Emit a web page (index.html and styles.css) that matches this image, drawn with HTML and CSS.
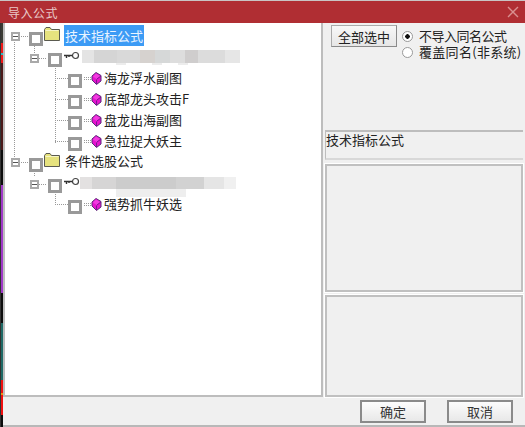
FILE: index.html
```html
<!DOCTYPE html>
<html lang="zh-CN">
<head>
<meta charset="utf-8">
<title>导入公式</title>
<link rel="stylesheet" href="styles.css">
</head>
<body>
<svg class="defs" width="0" height="0">
  <symbol id="folder" viewBox="0 0 16 14"><path d="M0.500 13.500V2.500L2 0.500H6L7.500 2.500H15.500V13.500Z" fill="#e6e27e" stroke="#5a5a50"/><path d="M1.500 3.500H14.500" stroke="#f6f4c4"/></symbol>
  <symbol id="key" viewBox="0 0 16 9"><path d="M0 4.500H8M2.500 4.500V7M5 4.500V6" stroke="#333" stroke-width="1.400" fill="none"/><circle cx="11.500" cy="4.500" r="3" fill="#fff" stroke="#444" stroke-width="1.200"/></symbol>
  <symbol id="gem" viewBox="0 0 11 13"><path d="M5 0.500L10 3.500V9L5.500 12.500L1 8V4Z" fill="#e612cf" stroke="#5b2a78"/><path d="M5 1.500L9 4L5.500 7L2 4.500Z" fill="#f23be0"/><path d="M5.500 7.500V12M6 7L10 4" stroke="#7a1a90" fill="none"/></symbol>
</svg>
<div class="window">
  <header class="titlebar">
    <span class="title">导入公式</span>
    <svg class="close" width="12" height="12" viewBox="0 0 12 12"><path d="M1 1L11 11M11 1L1 11" stroke="#d98f90" stroke-width="1.400" fill="none"/></svg>
  </header>
  <div class="content">
    <div class="edge"></div>
    <div class="main">
      <div class="upper">
        <div class="tree">
          <svg class="lines" width="120" height="200" viewBox="0 0 120 200">
            <path d="M9.500 17V135M29.500 21V30M50.500 43V120M29.500 146V154M50.500 169V183" stroke="#999" stroke-dasharray="1 1" fill="none"/>
          </svg>
          <div class="row r0"><span class="exp"></span><span class="dots"></span><span class="box"></span><svg class="folder" width="16" height="14"><use href="#folder"/></svg><span class="label selected">技术指标公式</span></div>
          <div class="row r1"><span class="exp"></span><span class="dots"></span><span class="box"></span><svg class="key" width="16" height="9"><use href="#key"/></svg><span class="blur b1"></span></div>
          <div class="row r2"><span class="dash"></span><span class="box"></span><span class="eq"></span><svg class="gem" width="11" height="13"><use href="#gem"/></svg><span class="label">海龙浮水副图</span></div>
          <div class="row r2"><span class="dash"></span><span class="box"></span><span class="eq"></span><svg class="gem" width="11" height="13"><use href="#gem"/></svg><span class="label">底部龙头攻击F</span></div>
          <div class="row r2"><span class="dash"></span><span class="box"></span><span class="eq"></span><svg class="gem" width="11" height="13"><use href="#gem"/></svg><span class="label">盘龙出海副图</span></div>
          <div class="row r2"><span class="dash"></span><span class="box"></span><span class="eq"></span><svg class="gem" width="11" height="13"><use href="#gem"/></svg><span class="label">急拉捉大妖主</span></div>
          <div class="row r0"><span class="exp"></span><span class="dots"></span><span class="box"></span><svg class="folder" width="16" height="14"><use href="#folder"/></svg><span class="label">条件选股公式</span></div>
          <div class="row r1"><span class="exp"></span><span class="dots"></span><span class="box"></span><svg class="key" width="16" height="9"><use href="#key"/></svg><span class="blur b2"></span></div>
          <div class="row r2"><span class="dash"></span><span class="box"></span><span class="eq"></span><svg class="gem" width="11" height="13"><use href="#gem"/></svg><span class="label">强势抓牛妖选</span></div>
        </div>
        <aside class="side">
          <div class="options">
            <button class="select-all">全部选中</button>
            <div class="radios">
              <label class="radio"><span class="dot on"></span><span class="rt tight">不导入同名公式</span></label>
              <label class="radio"><span class="dot"></span><span class="rt wide">覆盖同名(非系统)</span></label>
            </div>
          </div>
          <div class="panel info">技术指标公式</div>
          <div class="panel big"></div>
          <div class="panel big last"></div>
        </aside>
      </div>
      <footer class="actions">
        <button class="act">确定</button>
        <button class="act">取消</button>
      </footer>
    </div>
  </div>
</div>
</body>
</html>
```
FILE: styles.css
```css
* { box-sizing: border-box; }
html, body { margin: 0; padding: 0; background: #fff; }
body { width: 525px; height: 427px; overflow: hidden; font-family: "Noto Sans CJK SC", "Liberation Sans", sans-serif; font-size: 13px; color: #222; }
.defs { position: absolute; }
.window { width: 525px; height: 427px; display: flex; flex-direction: column; background: #f0f0f0; }
.titlebar { height: 23px; flex: none; background: #b02e33; border-top: 1px solid #c9c4c4; display: flex; align-items: center; justify-content: space-between; padding: 0 6px 0 8px; color: #e9c9c9; font-size: 12px; }
.title { letter-spacing: 0.500px; }
.content { flex: 1; display: flex; min-height: 0; }
.edge { width: 3px; flex: none; border-left: 1px solid #333; background: linear-gradient(#3a3a34 0 20px, #f01818 20px 30px, #30b8b8 30px 32px, #f01818 32px 40px, #4c1a1a 40px 127px, #0c0c0c 127px 162px, #a038c8 162px 270px, #0c0c0c 270px 300px, #1f6a66 300px 357px, #f01010 357px 370px, #f09010 370px 372px, #f01010 372px 392px, #0c0c0c 392px); }
.main { flex: 1; display: flex; flex-direction: column; min-width: 0; border-bottom: 2px solid #b8b8b8; }
.upper { flex: 1; display: flex; min-height: 0; }
.tree { position: relative; width: 320px; flex: none; background: #fff; border: 2px solid #bdbdbd; border-top: 0; padding-top: 5px; }
.lines { position: absolute; left: 0; top: 0; }
.row { position: relative; height: 21px; display: flex; align-items: center; }
.r0 { padding-left: 6px; }
.r1 { padding-left: 25px; }
.r2 { padding-left: 50px; }
.exp { width: 9px; height: 9px; flex: none; margin-bottom: 5px; border: 2px solid #a9a9a9; background: linear-gradient(#555,#555) center/5px 1px no-repeat #fff; }
.r1 .exp { margin-bottom: 3px; }
.dots { width: 7px; height: 1px; margin: 0 1px 5px 1px; flex: none; background: repeating-linear-gradient(90deg,#999 0 1px,transparent 1px 2px); }
.r1 .dots { width: 8px; margin: 0 1px 3px 0; }
.box { width: 14px; height: 14px; flex: none; border: 3px solid #999; background: #fff; }
.folder { flex: none; margin: -10px 0 0 1px; }
.label { margin-left: 2px; line-height: 18px; white-space: nowrap; font-size: 13px; margin-bottom: 6px; }
.r0 .label { margin-left: 5px; margin-bottom: 8px; }
.r0 .selected { margin-left: 4px; width: 80px; height: 21px; line-height: 21px; padding-left: 1px; background: #3c9bf5; color: #eaf4ff; margin-bottom: 6px; }
.key { flex: none; margin: 0 0 8px 2px; }
.blur { height: 20px; flex: none; }
.b1 { width: 160px; margin-bottom: 0; background:
  linear-gradient(90deg,#fff 0 2px,#e4e4e4 2px 14px,#d5d5d5 14px 37px,#d9d9d9 37px 60px,#d6d2cf 60px 75px,#d6d8d8 75px 90px,#dddddd 90px 105px,#cfcdcd 105px 118px,#dcdcdc 118px 145px,#e6e6e6 145px 160px) top/100% 13px no-repeat,
  linear-gradient(90deg,#fff 0 36px,#ececec 36px 46px,#fff 46px 72px,#ececec 72px 82px,#fff 82px 98px,#ececec 98px 108px,#fff 108px) 0 13px/100% 2px no-repeat; }
.r1 .b2 { width: 156px; margin: 3px 0 0 0; background:
  linear-gradient(90deg,#e3e1e1 0 12px,#d6d5d5 12px 36px,#cccccc 36px 96px,#d2d2d2 96px 124px,#e5e5e5 124px 144px,#f0f0f0 144px 156px) top/100% 12px no-repeat,
  linear-gradient(90deg,#fff 0 36px,#eeeeee 36px 106px,#fff 106px) bottom/100% 8px no-repeat; }
.dash { width: 13px; height: 1px; flex: none; margin-bottom: 5px; background: repeating-linear-gradient(90deg,#999 0 1px,transparent 1px 2px); }
.eq { width: 7px; height: 3px; margin: 0 0 4px 2px; flex: none; border-top: 1px dotted #999; border-bottom: 1px dotted #999; }
.gem { flex: none; margin-bottom: 4px; }
.side { flex: 1; display: flex; flex-direction: column; padding: 0 2px 0 2px; min-width: 0; }
.options { height: 107px; flex: none; display: flex; align-items: flex-start; padding: 2px 0 0 6px; }
.select-all { width: 66px; height: 22px; padding: 0; background: linear-gradient(#f8f8f8,#e6e6e6); border: 1px solid #8a8a8a; border-top-color: #aaa; border-left-color: #aaa; font: inherit; color: #222; }
.radios { margin-left: 5px; padding-top: 3px; display: flex; flex-direction: column; }
.radio { display: flex; align-items: center; height: 16px; line-height: 16px; white-space: nowrap; }
.rt { display: block; height: 16px; line-height: 16px; overflow: visible; }
.tight { letter-spacing: -0.500px; }
.wide { letter-spacing: 0.300px; }
.dot { width: 11px; height: 11px; margin-right: 6px; border-radius: 50%; border: 1px solid #999; background: #fff; flex: none; }
.dot.on { background: radial-gradient(circle,#111 0 2px,#fff 2.500px); }
.panel { border: 2px solid #bdbdbd; border-right-color: #d0d0d0; background: #f0f0f0; }
.info { height: 30px; line-height: 15px; border-left-width: 1px; border-bottom-color: #d8d8d8; border-right: 0; }
.big { height: 128px; margin-top: 4px; border-color: #c0c0c0; box-shadow: 0 0 0 1px #fff; }
.big.last { flex: 1; height: auto; margin-top: 3px; }
.actions { height: 28px; flex: none; display: flex; justify-content: flex-end; gap: 21px; padding: 3px 12px 0 0; }
.act { width: 66px; height: 23px; padding: 0; border: 2px solid #8a8a8a; background: linear-gradient(#fcfcfc,#e8e8e8); font: inherit; color: #333; }
```
